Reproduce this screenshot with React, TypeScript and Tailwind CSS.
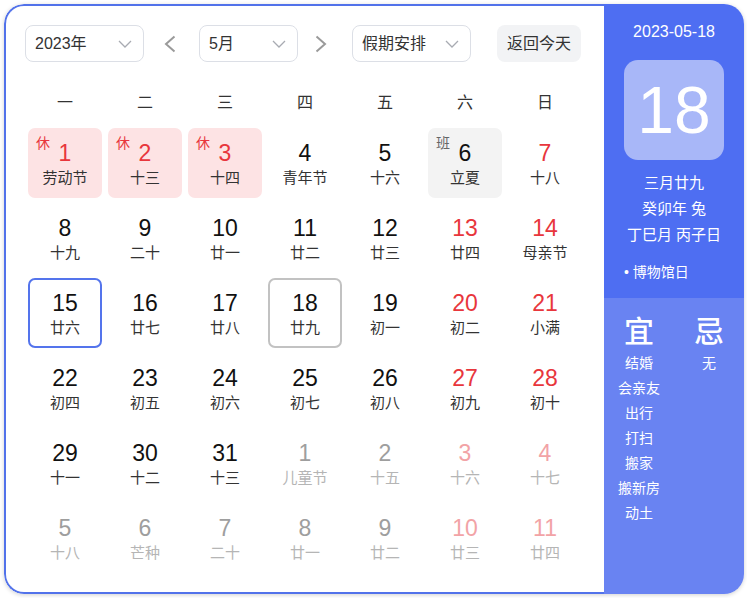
import React from 'react';

type Day = {
  n: number;
  lunar: string;
  mark?: '休' | '班';
  weekend?: boolean;
  other?: boolean;
  selected?: boolean;
  today?: boolean;
};

const WEEK = ['一', '二', '三', '四', '五', '六', '日'];

const rows: Day[][] = [
  [
    { n: 1, lunar: '劳动节', mark: '休' },
    { n: 2, lunar: '十三', mark: '休' },
    { n: 3, lunar: '十四', mark: '休' },
    { n: 4, lunar: '青年节' },
    { n: 5, lunar: '十六' },
    { n: 6, lunar: '立夏', mark: '班' },
    { n: 7, lunar: '十八', weekend: true },
  ],
  [
    { n: 8, lunar: '十九' },
    { n: 9, lunar: '二十' },
    { n: 10, lunar: '廿一' },
    { n: 11, lunar: '廿二' },
    { n: 12, lunar: '廿三' },
    { n: 13, lunar: '廿四', weekend: true },
    { n: 14, lunar: '母亲节', weekend: true },
  ],
  [
    { n: 15, lunar: '廿六', selected: true },
    { n: 16, lunar: '廿七' },
    { n: 17, lunar: '廿八' },
    { n: 18, lunar: '廿九', today: true },
    { n: 19, lunar: '初一' },
    { n: 20, lunar: '初二', weekend: true },
    { n: 21, lunar: '小满', weekend: true },
  ],
  [
    { n: 22, lunar: '初四' },
    { n: 23, lunar: '初五' },
    { n: 24, lunar: '初六' },
    { n: 25, lunar: '初七' },
    { n: 26, lunar: '初八' },
    { n: 27, lunar: '初九', weekend: true },
    { n: 28, lunar: '初十', weekend: true },
  ],
  [
    { n: 29, lunar: '十一' },
    { n: 30, lunar: '十二' },
    { n: 31, lunar: '十三' },
    { n: 1, lunar: '儿童节', other: true },
    { n: 2, lunar: '十五', other: true },
    { n: 3, lunar: '十六', other: true, weekend: true },
    { n: 4, lunar: '十七', other: true, weekend: true },
  ],
  [
    { n: 5, lunar: '十八', other: true },
    { n: 6, lunar: '芒种', other: true },
    { n: 7, lunar: '二十', other: true },
    { n: 8, lunar: '廿一', other: true },
    { n: 9, lunar: '廿二', other: true },
    { n: 10, lunar: '廿三', other: true, weekend: true },
    { n: 11, lunar: '廿四', other: true, weekend: true },
  ],
];

const yi = ['结婚', '会亲友', '出行', '打扫', '搬家', '搬新房', '动土'];

function ChevronDown() {
  return (
    <svg width="14" height="8" viewBox="0 0 14 8" fill="none">
      <polyline points="1,1 7,7 13,1" stroke="#a8abb2" strokeWidth="1.3" />
    </svg>
  );
}

function Arrow({ dir }: { dir: 'left' | 'right' }) {
  return (
    <svg width="12" height="18" viewBox="0 0 12 18" fill="none">
      <polyline
        points={dir === 'left' ? '10.5,1.5 2,9 10.5,16.5' : '1.5,1.5 10,9 1.5,16.5'}
        stroke="#9a9a9a"
        strokeWidth="2"
      />
    </svg>
  );
}

function Select({ label, width }: { label: string; width: string }) {
  return (
    <div
      className={`${width} h-[37px] flex items-center justify-between pl-[9px] pr-[11px] border border-[#dcdfe6] rounded-[8px] bg-white text-[16px] text-[#333]`}
    >
      <span>{label}</span>
      <ChevronDown />
    </div>
  );
}

function Cell({ d }: { d: Day }) {
  let bg = '';
  if (d.mark === '休') bg = 'bg-[#fde3e4]';
  if (d.mark === '班') bg = 'bg-[#f3f3f3]';
  let border = 'border-2 border-transparent';
  if (d.selected) border = 'border-2 border-[#5474ec]';
  if (d.today) border = 'border-2 border-[#c2c2c2]';

  let numColor = 'text-[#111]';
  let lunarColor = 'text-[#333]';
  if (d.mark === '休' || d.weekend) numColor = 'text-[#e8363c]';
  if (d.other) {
    numColor = d.weekend ? 'text-[#f2a3a6]' : 'text-[#9e9e9e]';
    lunarColor = 'text-[#b5b5b5]';
  }

  return (
    <div className={`relative h-[70px] rounded-[7px] flex flex-col items-center pt-[9px] ${bg} ${border}`}>
      {d.mark && (
        <span
          className={`absolute left-[6px] top-[4px] text-[14px] leading-[18px] ${
            d.mark === '休' ? 'text-[#e8363c]' : 'text-[#666]'
          }`}
        >
          {d.mark}
        </span>
      )}
      <span className={`text-[23px] leading-[28px] ${numColor}`}>{d.n}</span>
      <span className={`text-[15px] leading-[20px] mt-[1px] ${lunarColor}`}>{d.lunar}</span>
    </div>
  );
}

export default function App() {
  return (
    <div
      className="w-[747px] h-[598px] p-1 bg-white"
      style={{ fontFamily: '"Liberation Sans", "Noto Sans CJK SC", sans-serif' }}
    >
      <div className="w-[740px] h-[590px] flex rounded-[20px] overflow-hidden shadow-[0_1px_4px_rgba(0,0,0,0.18)]">
        {/* left: month grid */}
        <div className="w-[600px] bg-white border-2 border-r-0 border-[#5272ea] rounded-l-[20px] pl-[19px] pt-[19px]">
          <div className="flex items-center">
            <Select label="2023年" width="w-[119px]" />
            <div className="w-[55px] flex justify-center pr-[4px]">
              <Arrow dir="left" />
            </div>
            <Select label="5月" width="w-[99px]" />
            <div className="w-[54px] flex justify-center pr-[8px]">
              <Arrow dir="right" />
            </div>
            <Select label="假期安排" width="w-[119px]" />
            <div className="ml-[26px] w-[84px] h-[37px] flex items-center justify-center rounded-[8px] bg-[#f2f3f5] text-[16px] text-[#333]">
              返回今天
            </div>
          </div>

          <div className="ml-[3px] mt-[26px] grid grid-cols-[repeat(7,74px)] gap-x-[6px]">
            {WEEK.map((w) => (
              <div key={w} className="h-[30px] leading-[30px] text-center text-[16px] text-[#333]">
                {w}
              </div>
            ))}
          </div>

          <div className="ml-[3px] mt-[10px] grid grid-cols-[repeat(7,74px)] gap-x-[6px] gap-y-[5px]">
            {rows.flat().map((d, i) => (
              <Cell key={i} d={d} />
            ))}
          </div>
        </div>

        {/* right: day detail */}
        <div className="w-[140px] flex flex-col text-white">
          <div className="h-[294px] bg-[#4e6ef2] flex flex-col items-center pt-[18px]">
            <div className="text-[16px] leading-[20px]">2023-05-18</div>
            <div className="mt-[18px] w-[100px] h-[100px] rounded-[14px] bg-[#a8b7f8] flex items-center justify-center text-[66px] leading-none">
              18
            </div>
            <div className="mt-[10px] text-[15px] leading-[26px] text-center">
              <div>三月廿九</div>
              <div>癸卯年 兔</div>
              <div>丁巳月 丙子日</div>
            </div>
            <div className="self-start ml-[20px] mt-[14px] text-[14px] leading-[20px]">• 博物馆日</div>
          </div>
          <div className="flex-1 bg-[#6983f2] grid grid-cols-2 content-start pt-[15px]">
            <div className="flex flex-col items-center">
              <div className="text-[30px] leading-[38px] font-medium">宜</div>
              <div className="text-[14px] leading-[25px] text-center">
                {yi.map((t) => (
                  <div key={t}>{t}</div>
                ))}
              </div>
            </div>
            <div className="flex flex-col items-center">
              <div className="text-[30px] leading-[38px] font-medium">忌</div>
              <div className="text-[14px] leading-[25px]">无</div>
            </div>
          </div>
        </div>
      </div>
    </div>
  );
}
